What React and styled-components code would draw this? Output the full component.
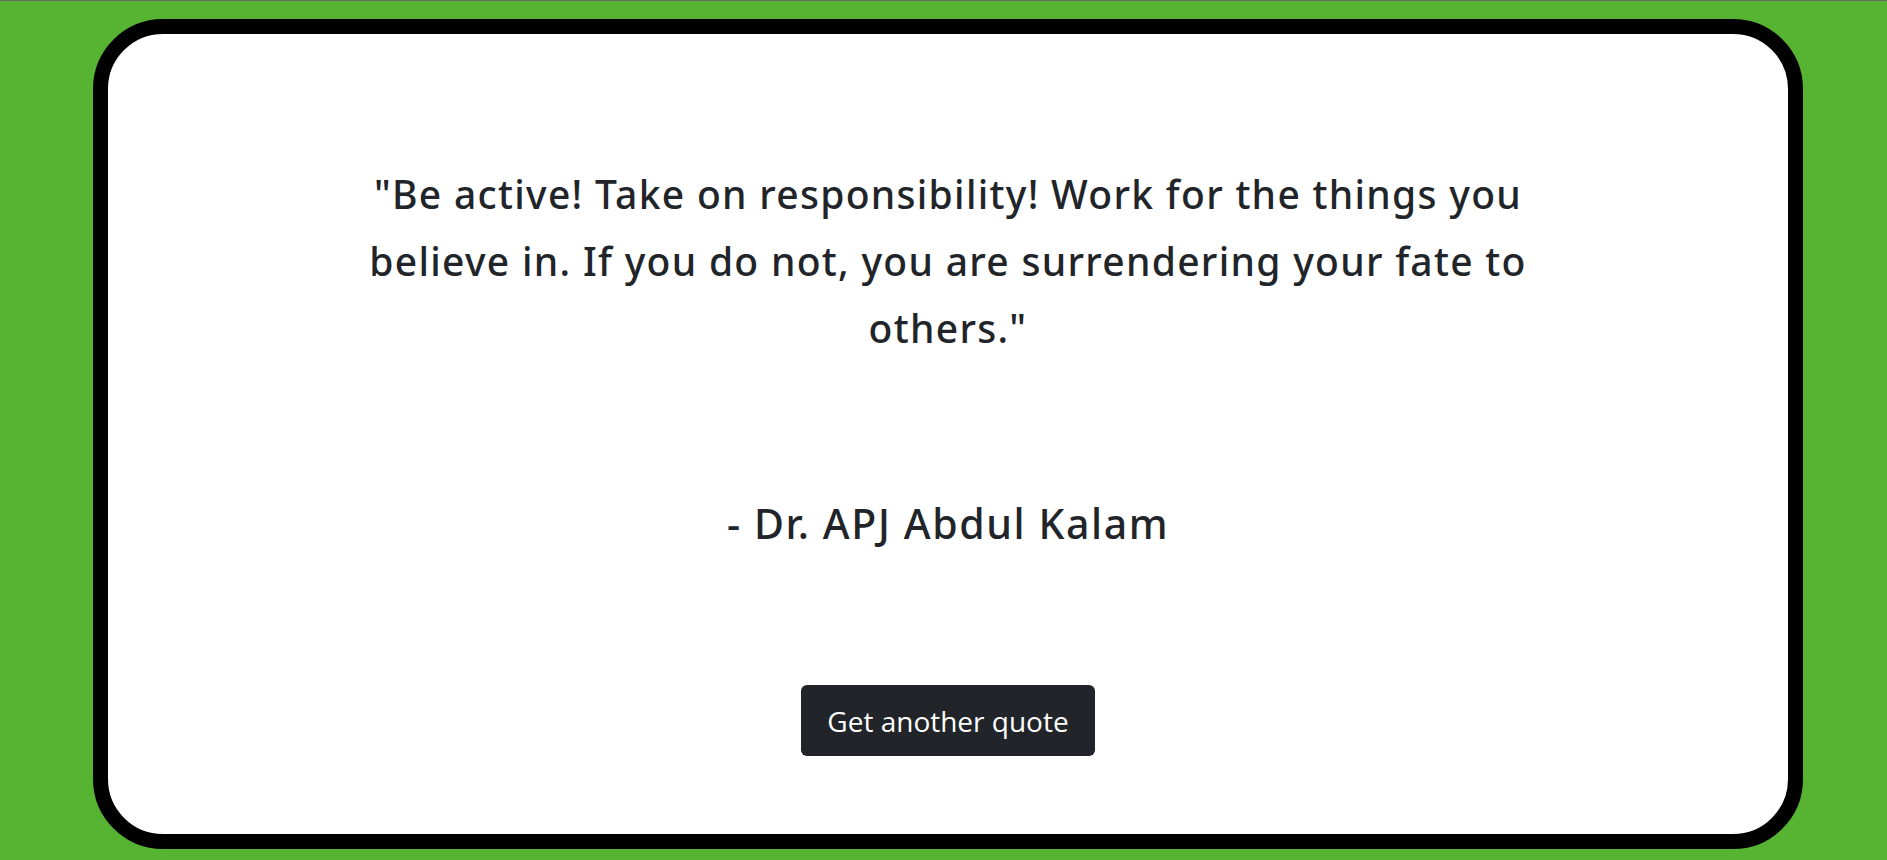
import styled, { createGlobalStyle } from "styled-components";

const GlobalStyle = createGlobalStyle`
  html, body {
    margin: 0;
    padding: 0;
    height: 100%;
  }
  body {
    background-color: #57b332;
    border-top: 1px solid #6a6a6a;
    box-sizing: border-box;
    overflow: hidden;
  }
`;

const Page = styled.div`
  height: 859px;
  padding: 18px 84px 11px 93px;
  box-sizing: border-box;
`;

const Card = styled.div`
  height: 100%;
  box-sizing: border-box;
  background-color: #fff;
  border: 15px solid #000;
  border-radius: 70px;
  display: flex;
  flex-direction: column;
  align-items: center;
  padding-top: 126px;
`;

const Quote = styled.p`
  margin: 0;
  width: 1200px;
  text-align: center;
  font-family: "Noto Sans", sans-serif;
  font-weight: 500;
  font-size: 39px;
  letter-spacing: 1.3px;
  line-height: 67px;
  color: #212529;
`;

const Author = styled.h2`
  margin: 137px 0 0;
  font-family: "Noto Sans", sans-serif;
  font-weight: 500;
  font-size: 41px;
  letter-spacing: 1.6px;
  line-height: 50px;
  color: #212529;
`;

const Button = styled.button`
  margin-top: 137px;
  width: 294px;
  height: 71px;
  border: none;
  border-radius: 6px;
  background-color: #212529;
  color: #fff;
  font-family: "Open Sans", sans-serif;
  font-size: 28px;
  cursor: pointer;

  &:hover {
    background-color: #424649;
  }
`;

const App = () => {
  return (
    <>
      <GlobalStyle />
      <Page>
        <Card>
          <Quote>
            "Be active! Take on responsibility! Work for the things you believe
            in. If you do not, you are surrendering your fate to others."
          </Quote>
          <Author>- Dr. APJ Abdul Kalam</Author>
          <Button>Get another quote</Button>
        </Card>
      </Page>
    </>
  );
};

export default App;
